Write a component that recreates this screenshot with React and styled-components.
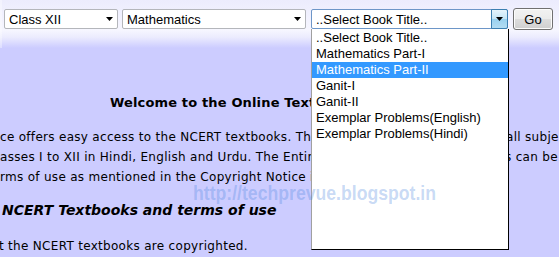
import React from "react";
import styled, { createGlobalStyle } from "styled-components";

const GlobalStyle = createGlobalStyle`
  html, body { margin: 0; padding: 0; }
  body { background: #ccccff; overflow: hidden; }
`;

const Page = styled.div`
  position: relative;
  width: 559px;
  height: 257px;
  overflow: hidden;
  background: #ccccff;
  font-family: "DejaVu Sans", Verdana, sans-serif;
  color: #000;
`;

const TopBar = styled.div`
  height: 48px;
  box-sizing: border-box;
  padding: 8px 0 0 4px;
  display: flex;
  align-items: flex-start;
  border-left: 2px solid rgba(255, 255, 255, 0.35);
  margin-right: 0;
  background: linear-gradient(to bottom, #ececfd 0px, #f6f6ff 30px, #ececfe 37px, #ccccff 48px);
`;

const Controls = styled.div`
  display: flex;
  align-items: center;
  height: 22px;
  margin-left: -2px;
`;

const Select = styled.div`
  position: relative;
  box-sizing: border-box;
  width: ${(p) => p.$w}px;
  height: 20px;
  margin-right: ${(p) => p.$gap}px;
  border: 1px solid ${(p) => (p.$focus ? "#6d96c8" : "#b4b6bb")};
  border-radius: 2px;
  background: #fff;
  display: flex;
  align-items: center;
  padding-left: 4px;
  font-family: "Liberation Sans", Arial, sans-serif;
  font-size: 13px;
  color: #000;
`;

const SelectText = styled.span`
  flex: 1;
  white-space: nowrap;
  overflow: hidden;
  line-height: 18px;
  padding-top: 1px;
`;

const ArrowBox = styled.span`
  box-sizing: border-box;
  width: ${(p) => (p.$active ? 17 : 16)}px;
  height: ${(p) => (p.$active ? 20 : 18)}px;
  margin-right: ${(p) => (p.$active ? -1 : 0)}px;
  display: flex;
  align-items: center;
  justify-content: center;
  ${(p) =>
    p.$active
      ? `border: 1px solid #3c7fb1; border-radius: 0 2px 2px 0;
         background: linear-gradient(to bottom, #e5f4fc 0%, #c4e5f6 50%, #98d1ef 50%, #b3dcf2 100%);`
      : ""}
`;

const GoButton = styled.button`
  box-sizing: border-box;
  width: 40px;
  height: 22px;
  padding: 0;
  border: 1px solid #707070;
  border-radius: 3px;
  background: linear-gradient(to bottom, #f2f2f2 0%, #ebebeb 50%, #dddddd 50%, #cfcfcf 100%);
  font-family: "Liberation Sans", Arial, sans-serif;
  font-size: 13px;
  color: #000;
  box-shadow: inset 0 0 0 1px #fcfcfc;
`;

const DropList = styled.div`
  position: absolute;
  left: 311px;
  top: 29px;
  width: 198px;
  height: 221px;
  box-sizing: border-box;
  background: #fff;
  border: 1px solid #000;
  border-top: none;
  border-left-color: #a0a0a0;
  padding-top: 1px;
  font-family: "Liberation Sans", Arial, sans-serif;
  font-size: 13px;
  z-index: 2;
`;

const Option = styled.div`
  height: 16px;
  line-height: 16px;
  padding-left: 4px;
  white-space: nowrap;
  background: ${(p) => (p.$selected ? "#3399ff" : "transparent")};
  color: ${(p) => (p.$selected ? "#fff" : "#000")};
`;

const Content = styled.div`
  display: flex;
  flex-direction: column;
`;

const Welcome = styled.h1`
  margin: 47px 0 0 110px;
  font-size: 13px;
  line-height: 16px;
  font-weight: bold;
  letter-spacing: 0.15px;
  white-space: nowrap;
`;

const Para = styled.div`
  margin-top: 16px;
  font-size: 12px;
  line-height: 20px;
  letter-spacing: 0.3px;
`;

const Line = styled.div`
  display: grid;
  grid-template-columns: ${(p) => p.$split}px max-content;
  white-space: nowrap;
`;

const Cell = styled.span`
  overflow: hidden;
`;

const SubHeading = styled.h2`
  margin: 13px 0 0 2px;
  font-size: 14px;
  line-height: 20px;
  font-weight: bold;
  font-style: italic;
  white-space: nowrap;
`;

const Note = styled.p`
  margin: 16px 0 0 -1px;
  font-size: 12px;
  line-height: 20px;
  letter-spacing: 0.3px;
  white-space: nowrap;
`;

const Watermark = styled.div`
  position: absolute;
  left: 193px;
  top: 181px;
  font-family: "Liberation Sans", Arial, sans-serif;
  font-weight: bold;
  font-size: 21px;
  line-height: 24px;
  color: rgba(70, 130, 220, 0.3);
  transform: scaleX(0.84);
  transform-origin: left top;
  white-space: nowrap;
  z-index: 3;
  pointer-events: none;
`;

const Arrow = () => (
  <svg width="7" height="4" viewBox="0 0 7 4">
    <path d="M0 0H7L3.5 4Z" fill="#000" />
  </svg>
);

const books = [
  "..Select Book Title..",
  "Mathematics Part-I",
  "Mathematics Part-II",
  "Ganit-I",
  "Ganit-II",
  "Exemplar Problems(English)",
  "Exemplar Problems(Hindi)",
];

export default function App() {
  return (
    <Page>
      <GlobalStyle />
      <TopBar>
        <Controls>
          <Select $w={114} $gap={4}>
            <SelectText>Class XII</SelectText>
            <ArrowBox><Arrow /></ArrowBox>
          </Select>
          <Select $w={184} $gap={5}>
            <SelectText>Mathematics</SelectText>
            <ArrowBox><Arrow /></ArrowBox>
          </Select>
          <Select $w={197} $gap={5} $focus>
            <SelectText>..Select Book Title..</SelectText>
            <ArrowBox $active><Arrow /></ArrowBox>
          </Select>
          <GoButton>Go</GoButton>
        </Controls>
      </TopBar>
      <DropList>
        {books.map((b, i) => (
          <Option key={b} $selected={i === 2}>{b}</Option>
        ))}
      </DropList>
      <Content>
        <Welcome>Welcome to the Online Textbooks</Welcome>
        <Para>
          <Line $split={506}>
            <Cell>ce offers easy access to the NCERT textbooks. The textbooks of</Cell>
            <span>all subje</span>
          </Line>
          <Line $split={505}>
            <Cell>asses I to XII in Hindi, English and Urdu. The Entire book or chapter</Cell>
            <span>s can be</span>
          </Line>
          <Line $split={559}>
            <Cell>rms of use as mentioned in the Copyright Notice is given below.</Cell>
          </Line>
        </Para>
        <SubHeading>NCERT Textbooks and terms of use</SubHeading>
        <Note>t the NCERT textbooks are copyrighted.</Note>
      </Content>
      <Watermark>http://techprevue.blogspot.in</Watermark>
    </Page>
  );
}
